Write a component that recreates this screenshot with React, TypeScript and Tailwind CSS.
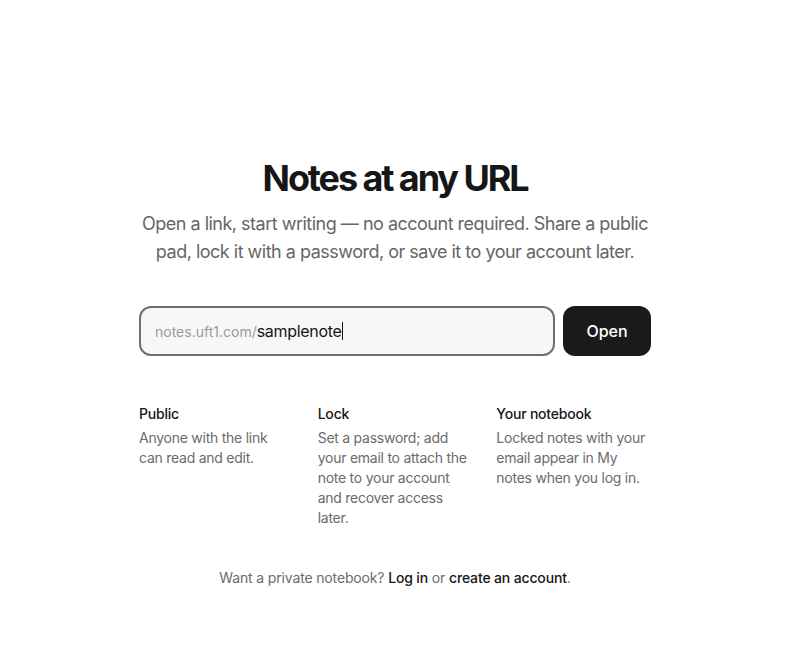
export default function App() {
  const features = [
    { title: "Public", body: "Anyone with the link can read and edit." },
    {
      title: "Lock",
      body: "Set a password; add your email to attach the note to your account and recover access later.",
    },
    {
      title: "Your notebook",
      body: "Locked notes with your email appear in My notes when you log in.",
    },
  ];

  return (
    <div
      className="min-h-screen bg-white text-[#111] pt-[158px] pb-16"
      style={{ fontFamily: "Inter, 'Liberation Sans', sans-serif" }}
    >
      <main className="max-w-[512px] mx-auto">
        <h1 className="text-center text-[36px] leading-10 font-bold tracking-[-0.058em] text-[#161616]">
          Notes at any URL
        </h1>
        <p className="mt-3 text-center text-[18px] leading-7 tracking-[-0.5px] text-[#666] -mx-2">
          Open a link, start writing — no account required. Share a public
          pad, lock it with a password, or save it to your account later.
        </p>

        <form className="mt-10 flex gap-2" onSubmit={(e) => e.preventDefault()}>
          <label className="flex-1 h-[50px] flex items-center rounded-xl border-2 border-[#6f6f6f] bg-[#f7f7f7] pl-[14px] pr-4">
            <span className="text-[14px] text-[#9a9a9a]">notes.uft1.com/</span>
            <span className="text-[16px] tracking-[-0.3px] text-[#161616]">samplenote</span>
            <span className="w-px h-[18px] bg-[#161616]" />
          </label>
          <button
            type="submit"
            className="w-[88px] h-[50px] rounded-xl bg-[#1a1a1a] text-white text-[16px] font-medium"
          >
            Open
          </button>
        </form>

        <div className="mt-12 grid grid-cols-3 gap-6">
          {features.map((f) => (
            <div key={f.title}>
              <h2 className="text-[14px] leading-5 font-medium tracking-[-0.2px] text-[#161616]">
                {f.title}
              </h2>
              <p className="mt-1 text-[14px] leading-5 tracking-[-0.25px] text-[#6b6b6b]">
                {f.body}
              </p>
            </div>
          ))}
        </div>

        <p className="mt-10 text-center text-[14px] leading-5 tracking-[-0.15px] text-[#6b6b6b]">
          Want a private notebook?{" "}
          <a href="#" className="text-[#161616] font-medium">
            Log in
          </a>{" "}
          or{" "}
          <a href="#" className="text-[#161616] font-medium">
            create an account
          </a>
          .
        </p>
      </main>
    </div>
  );
}
